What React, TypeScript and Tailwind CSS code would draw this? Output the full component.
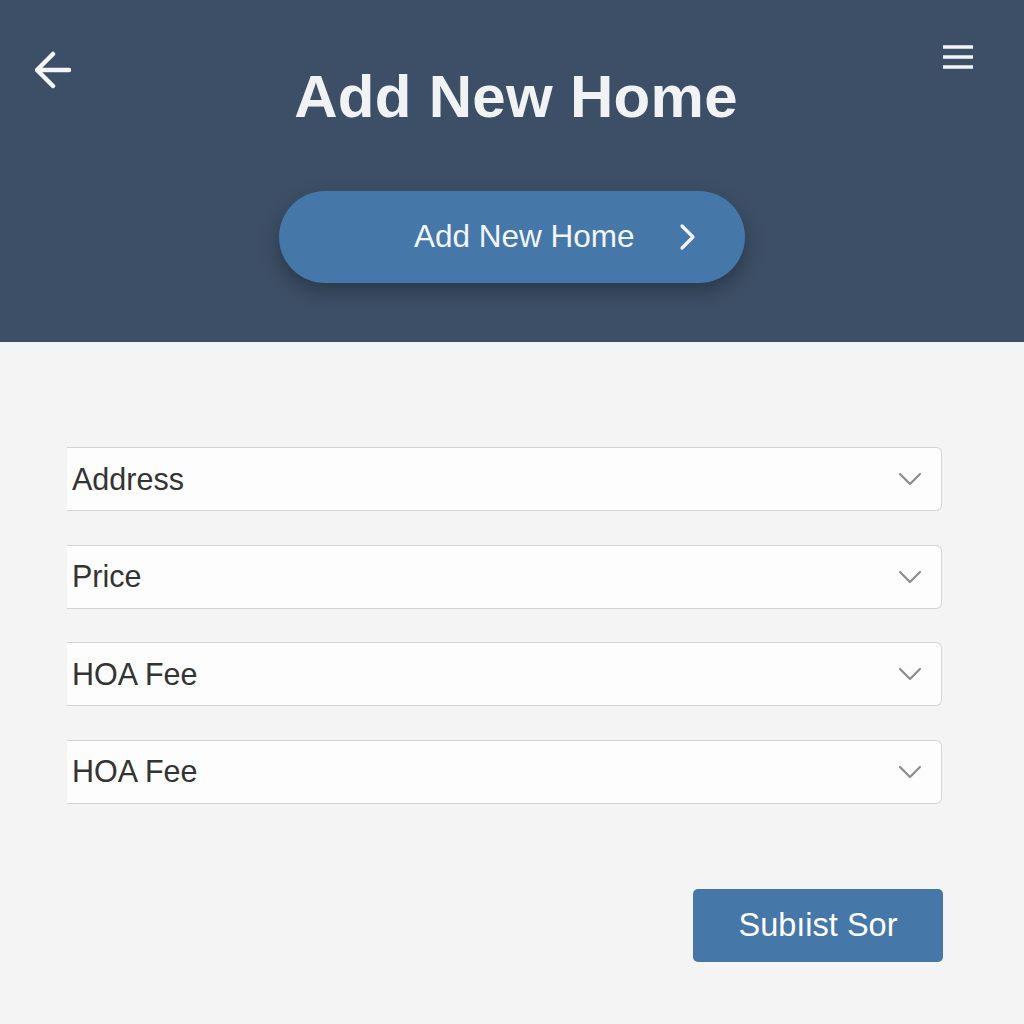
import React from "react";

const fields = ["Address", "Price", "HOA Fee", "HOA Fee"];

function BackArrow() {
  return (
    <svg width="36" height="38" viewBox="0 0 36 38" fill="none">
      <path
        d="M34 19H3M18 3L2 19L18 35"
        stroke="#f4f5f7"
        strokeWidth="4.5"
        strokeLinecap="round"
        strokeLinejoin="round"
      />
    </svg>
  );
}

function MenuIcon() {
  return (
    <svg width="32" height="26" viewBox="0 0 32 26" fill="none">
      <path d="M1 3H31M1 13H31M1 23H31" stroke="#f4f5f7" strokeWidth="3.5" />
    </svg>
  );
}

function ChevronRight() {
  return (
    <svg width="20" height="28" viewBox="0 0 20 28" fill="none">
      <path d="M4 3L15 14L4 25" stroke="#f2f5f9" strokeWidth="3.2" strokeLinecap="round" strokeLinejoin="round" />
    </svg>
  );
}

function ChevronDown() {
  return (
    <svg width="24" height="14" viewBox="0 0 24 14" fill="none">
      <path d="M2 2L12 12L22 2" stroke="#8c8c8c" strokeWidth="2.2" strokeLinecap="round" strokeLinejoin="round" />
    </svg>
  );
}

export default function App() {
  return (
    <div className="w-[1024px] h-[1024px] bg-[#f4f4f4] font-['Liberation_Sans',Arial,sans-serif] overflow-hidden">
      <header className="h-[342px] bg-[#3d4f66] flex flex-col items-center">
        <div className="w-full grid grid-cols-[1fr_auto_1fr] items-start">
          <div className="pl-[35px] pt-[51px]">
            <BackArrow />
          </div>
          <h1 className="mt-[67px] ml-[8px] text-[60px] leading-[60px] font-bold text-[#f1f2f4] tracking-[0.3px]">
            Add New Home
          </h1>
          <div className="justify-self-end pr-[50px] pt-[44px]">
            <MenuIcon />
          </div>
        </div>
        <button className="mt-[64px] w-[466px] h-[92px] rounded-full bg-[#4677a9] shadow-[0_8px_18px_rgba(20,30,45,0.45)] flex items-center pl-[135px]">
          <span className="text-[31.5px] text-[#f2f5f9] leading-none">Add New Home</span>
          <span className="ml-[43px] flex">
            <ChevronRight />
          </span>
        </button>
      </header>

      <main className="pt-[105px] pl-[67px]">
        <div className="w-[875px] flex flex-col gap-[33.5px]">
          {fields.map((label, i) => (
            <div
              key={i}
              className="h-[64px] bg-[#fdfdfd] border-y border-r border-[#d2d4d7] rounded-r-[6px] flex items-center justify-between pl-[5px] pr-[19px]"
            >
              <span className="text-[30.5px] text-[#333333] leading-none">{label}</span>
              <ChevronDown />
            </div>
          ))}
        </div>
        <div className="w-[876px] flex justify-end mt-[85px]">
          <button className="w-[250px] h-[73px] rounded-[5px] bg-[#4677a9] text-white text-[32.5px] leading-none">
            Subıist Sor
          </button>
        </div>
      </main>
    </div>
  );
}
